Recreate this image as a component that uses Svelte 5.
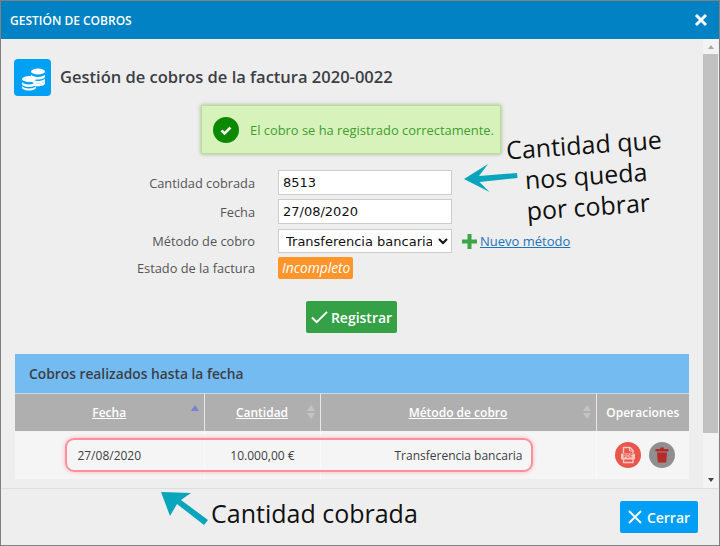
<script>
  const fields = [
    { label: 'Cantidad cobrada', value: '8513' },
    { label: 'Fecha', value: '27/08/2020' }
  ];
  const cobros = [
    { fecha: '27/08/2020', cantidad: '10.000,00 €', metodo: 'Transferencia bancaria' }
  ];
</script>

<div class="window">
  <header class="titlebar">
    <span class="wintitle">GESTIÓN DE COBROS</span>
    <svg class="close" viewBox="0 0 14 14" width="14" height="14">
      <path d="M2 2l10 10M12 2L2 12" stroke="#fff" stroke-width="3" fill="none" />
    </svg>
  </header>

  <div class="middle">
    <main class="content">
      <div class="heading">
        <span class="logo">
          <svg viewBox="0 0 36 36" width="36" height="36">
            <g fill="#fff">
              <ellipse cx="23" cy="11.5" rx="7" ry="3" />
              <path d="M16 14.5c1 1.6 3.500 2.500 7 2.500s6-.9 7-2.500v2c0 1.600-3 3-7 3s-7-1.400-7-3z" />
              <path d="M16 18.500c1 1.600 3.500 2.500 7 2.500s6-.9 7-2.500v2c0 1.600-3 3-7 3s-7-1.400-7-3z" />
              <path d="M18 22.800c1.500.5 3.200.7 5 .7 3.500 0 6-.9 7-2.500v2.500c0 1.500-3 2.800-7 2.800-1 0-2-.1-3-.2z" />
              <ellipse cx="14" cy="19" rx="7" ry="3" />
              <path d="M7 22c1 1.600 3.500 2.500 7 2.500s6-.9 7-2.500v2c0 1.600-3 3-7 3s-7-1.400-7-3z" />
              <path d="M7 26c1 1.600 3.500 2.500 7 2.500s6-.9 7-2.500v1.500c0 1.600-3 3-7 3s-7-1.400-7-3z" />
            </g>
          </svg>
        </span>
        <h1>Gestión de cobros de la factura 2020-0022</h1>
      </div>

      <div class="alert-row">
        <div class="alert">
          <span class="ok">
            <svg viewBox="0 0 14 14" width="14" height="14">
              <path d="M2.500 7.500l3 3 6-6" stroke="#fff" stroke-width="2.600" fill="none" />
            </svg>
          </span>
          El cobro se ha registrado correctamente.
        </div>
      </div>

      <div class="form">
        {#each fields as f}
          <span class="label">{f.label}</span>
          <input class="input" type="text" value={f.value} />
        {/each}

        <span class="label method-label">Método de cobro</span>
        <div class="method">
          <select class="select">
            <option>Transferencia bancaria</option>
          </select>
          <svg class="plus" viewBox="0 0 15 15" width="15" height="15">
            <path d="M7.500 0v15M0 7.500h15" stroke="#3aa648" stroke-width="4" />
          </svg>
          <a class="newlink" href="#nuevo">Nuevo método</a>
        </div>

        <span class="label">Estado de la factura</span>
        <div class="status"><span class="badge">Incompleto</span></div>
      </div>

      <div class="submit">
        <button class="register" type="button">
          <svg viewBox="0 0 18 14" width="17" height="14">
            <path d="M1 7.500l5 5L17 1.500" stroke="#fff" stroke-width="2" fill="none" />
          </svg>
          Registrar
        </button>
      </div>

      <section class="panel">
        <h2>Cobros realizados hasta la fecha</h2>
        <table>
          <colgroup>
            <col class="c1" />
            <col class="c2" />
            <col class="c3" />
            <col />
          </colgroup>
          <thead>
            <tr>
              <th><u>Fecha</u><span class="sort"><i class="up active"></i></span></th>
              <th><u>Cantidad</u><span class="sort"><i class="up"></i><i class="down"></i></span></th>
              <th><u>Método de cobro</u><span class="sort"><i class="up"></i><i class="down"></i></span></th>
              <th>Operaciones</th>
            </tr>
          </thead>
          <tbody>
            {#each cobros as c}
              <tr>
                <td class="fecha">{c.fecha}</td>
                <td class="cantidad">{c.cantidad}</td>
                <td class="metodo">{c.metodo}</td>
                <td>
                  <div class="ops">
                    <span class="op pdf">
                      <svg viewBox="0 0 16 18" width="16" height="18">
                        <path d="M3.500 7V1.500h6.500l3 3V7M3.500 13.500v3h9.500v-3" fill="none" stroke="#f8c9c4" stroke-width="1.400" />
                        <path d="M9.500 1.500V5h3.500" fill="none" stroke="#f8c9c4" />
                        <rect x="1" y="7.500" width="14" height="6" rx="1" fill="#f8c9c4" />
                        <text x="8" y="12.400" class="pdf-text">PDF</text>
                      </svg>
                    </span>
                    <span class="op trash">
                      <svg viewBox="0 0 14 16" width="14" height="16">
                        <path d="M5 0.500h4V2h4.500v2.500H.5V2H5zM2 5.500h10l-.8 10H2.800z" fill="#b52b27" />
                      </svg>
                    </span>
                  </div>
                </td>
              </tr>
            {/each}
          </tbody>
        </table>
        <div class="highlight"></div>
      </section>

      <div class="note note-top">
        <span>Cantidad que</span>
        <span>nos queda</span>
        <span>por cobrar</span>
      </div>
      <svg class="arrow arrow-top" viewBox="0 0 54 28" width="54" height="28">
        <path d="M0 15L24 0l-9 12 38-3 .5 5-38 4 10 10z" fill="#08a5bd" />
      </svg>
    </main>

    <div class="scrollbar">
      <span class="tri tri-up"></span>
      <div class="thumb"></div>
      <span class="tri tri-down"></span>
    </div>
  </div>

  <footer class="footer">
    <svg class="arrow-bottom" viewBox="0 0 48 34" width="48" height="34">
      <path d="M1 1l30 1-10 7 27 20-4 5-27-21-7 12z" fill="#08a5bd" />
    </svg>
    <span class="note-bottom">Cantidad cobrada</span>
    <button class="closebtn" type="button">
      <svg viewBox="0 0 14 14" width="14" height="14">
        <path d="M1 1l12 12M13 1L1 13" stroke="#fff" stroke-width="1.800" fill="none" />
      </svg>
      Cerrar
    </button>
  </footer>
</div>

<style>
  :global(body) {
    margin: 0;
    background: #eee;
  }

  .window {
    position: relative;
    width: 720px;
    height: 546px;
    box-sizing: border-box;
    display: flex;
    flex-direction: column;
    border: 1px solid #808080;
    background: #eee;
    font-family: "Open Sans", sans-serif;
    color: #444;
    overflow: hidden;
  }

  .titlebar {
    height: 38px;
    flex-shrink: 0;
    display: flex;
    align-items: center;
    justify-content: space-between;
    padding: 0 11px 0 9px;
    background: #0082c4;
    color: #fff;
  }
  .wintitle {
    font-size: 12px;
    font-weight: 600;
  }
  .close { margin-top: -1px; }

  .middle {
    flex: 1;
    display: flex;
    min-height: 0;
  }

  .content {
    position: relative;
    width: 702px;
    padding: 20px 0 0 13px;
    box-sizing: border-box;
    overflow: hidden;
  }

  .heading {
    display: flex;
    align-items: center;
    gap: 9px;
  }
  .logo {
    width: 37px;
    height: 37px;
    border-radius: 4px;
    background: #00a0f5;
    display: flex;
    align-items: center;
    justify-content: center;
  }
  h1 {
    margin: -2px 0 0;
    font-size: 16.5px;
    font-weight: 600;
    color: #3c3f46;
  }

  .alert-row {
    display: flex;
    margin: 9px 0 0 187px;
  }
  .alert {
    width: 300px;
    height: 49px;
    box-sizing: border-box;
    display: flex;
    align-items: center;
    gap: 11px;
    padding-left: 11px;
    background: #d8f2bc;
    border: 1px solid #bcdc9d;
    box-shadow: 0 0 4px #9bb982;
    color: #3f9e30;
    font-size: 12.9px;
    white-space: nowrap;
  }
  .ok {
    width: 26px;
    height: 26px;
    border-radius: 50%;
    background: #0b8a00;
    display: flex;
    align-items: center;
    justify-content: center;
  }

  .form {
    display: grid;
    grid-template-columns: 241px 1fr;
    column-gap: 23px;
    row-gap: 4px;
    align-items: center;
    margin-top: 16px;
    font-size: 12.8px;
  }
  .label {
    text-align: right;
    color: #555;
  }
  .input {
    width: 174px;
    height: 25px;
    box-sizing: border-box;
    padding: 0 4px;
    border: 1px solid #ccc;
    background: #fff;
    font-family: "DejaVu Sans", sans-serif;
    font-size: 13px;
    color: #111;
    outline: none;
  }
  .method {
    display: flex;
    align-items: center;
    padding-top: 1px;
  }
  .select {
    width: 174px;
    height: 24px;
    box-sizing: border-box;
    border: 1px solid #ccc;
    border-radius: 0;
    background: #fff;
    font-family: "DejaVu Sans", sans-serif;
    font-size: 13px;
    color: #111;
    padding: 0 3px;
  }
  .plus { margin-left: 10px; }
  .newlink {
    margin-left: 3px;
    color: #1c75b8;
    font-size: 13px;
  }
  .status { display: flex; }
  .badge {
    padding: 0 3px 0 4px;
    height: 22px;
    line-height: 22px;
    border-radius: 2px;
    background: #ff952b;
    color: #fff;
    font-style: italic;
    font-size: 13.8px;
  }

  .submit {
    margin: 22px 0 0 292px;
  }
  .register {
    width: 91px;
    height: 32px;
    display: flex;
    align-items: center;
    justify-content: center;
    gap: 3px;
    padding: 0;
    border: none;
    border-radius: 2px;
    background: #35a147;
    color: #fff;
    font-family: inherit;
    font-size: 14px;
    font-weight: 600;
  }

  .panel {
    position: relative;
    width: 674px;
    margin: 21px 0 0 1px;
    background: #f5f5f5;
  }
  h2 {
    margin: 0;
    height: 39px;
    line-height: 39px;
    padding-left: 14px;
    background: #74bbf1;
    border-bottom: 1px solid #cfd8df;
    font-size: 13.8px;
    font-weight: 600;
    color: #3c3f46;
  }
  table {
    width: 674px;
    table-layout: fixed;
    border-collapse: collapse;
    font-size: 12px;
  }
  .c1 { width: 189px; }
  .c2 { width: 116px; }
  .c3 { width: 276px; }
  th {
    position: relative;
    height: 37px;
    padding: 0;
    box-sizing: border-box;
    background: #afafaf;
    color: #fff;
    font-weight: 600;
    border-left: 1px solid #e8e8e8;
  }
  th:first-child, td:first-child { border-left: none; }
  td {
    height: 48px;
    padding: 0;
    box-sizing: border-box;
    text-align: center;
    color: #3c3f46;
    border-left: 1px dotted #fff;
  }
  .cantidad { padding-left: 1px; }
  .metodo {
    text-align: right;
    padding-right: 73px;
  }
  .sort {
    position: absolute;
    right: 5px;
    top: 11px;
    display: flex;
    flex-direction: column;
    gap: 2px;
  }
  .sort i {
    width: 0;
    height: 0;
    border-left: 4px solid transparent;
    border-right: 4px solid transparent;
  }
  .up { border-bottom: 6px solid #c4c4c4; }
  .down { border-top: 6px solid #c4c4c4; }
  .up.active { border-bottom-color: #7f7fd0; }

  .ops {
    display: flex;
    justify-content: center;
    gap: 8px;
    padding-left: 4px;
  }
  .op {
    width: 26px;
    height: 26px;
    border-radius: 50%;
    display: flex;
    align-items: center;
    justify-content: center;
  }
  .pdf { background: #e9564c; }
  .trash { background: #8f8f8f; }
  .pdf-text {
    font-family: "Open Sans", sans-serif;
    font-size: 5px;
    font-weight: 700;
    fill: #e9564c;
    text-anchor: middle;
  }

  .highlight {
    position: absolute;
    left: 50px;
    top: 84px;
    width: 468px;
    height: 34px;
    box-sizing: border-box;
    border: 2px solid #fd8f9f;
    border-radius: 9px;
    box-shadow: 0 0 4px #ffb0bd;
    pointer-events: none;
  }

  .note {
    position: absolute;
    left: 505px;
    top: 90px;
    display: flex;
    flex-direction: column;
    align-items: center;
    width: 160px;
    font-size: 25px;
    line-height: 31px;
    color: #111;
    transform: rotate(-4deg);
  }

  .arrow-top {
    position: absolute;
    left: 463px;
    top: 125px;
  }

  .scrollbar {
    width: 15px;
    display: flex;
    flex-direction: column;
    align-items: center;
    background: #f3f3f3;
    padding: 6px 0;
    box-sizing: border-box;
  }
  .thumb {
    width: 100%;
    height: 379px;
    margin: 5px 0 auto;
    background: #c1c1c1;
  }
  .tri {
    width: 0;
    height: 0;
    border-left: 3.500px solid transparent;
    border-right: 3.500px solid transparent;
  }
  .tri-up { border-bottom: 4px solid #a8a8a8; }
  .tri-down { border-top: 4px solid #444; }

  .footer {
    position: relative;
    height: 57px;
    flex-shrink: 0;
    box-sizing: border-box;
    display: flex;
    align-items: center;
    justify-content: flex-end;
    padding-right: 21px;
    border-top: 1px solid #ddd;
    background: #eee;
  }
  .arrow-bottom {
    position: absolute;
    left: 159px;
    top: 2px;
  }
  .note-bottom {
    position: absolute;
    left: 210px;
    top: 7px;
    font-size: 25px;
    line-height: 34px;
    color: #111;
  }
  .closebtn {
    width: 78px;
    height: 32px;
    display: flex;
    align-items: center;
    justify-content: center;
    gap: 5px;
    padding: 0;
    border: none;
    border-radius: 2px;
    background: #009ef5;
    color: #fff;
    font-family: inherit;
    font-size: 14px;
    font-weight: 600;
  }
</style>
